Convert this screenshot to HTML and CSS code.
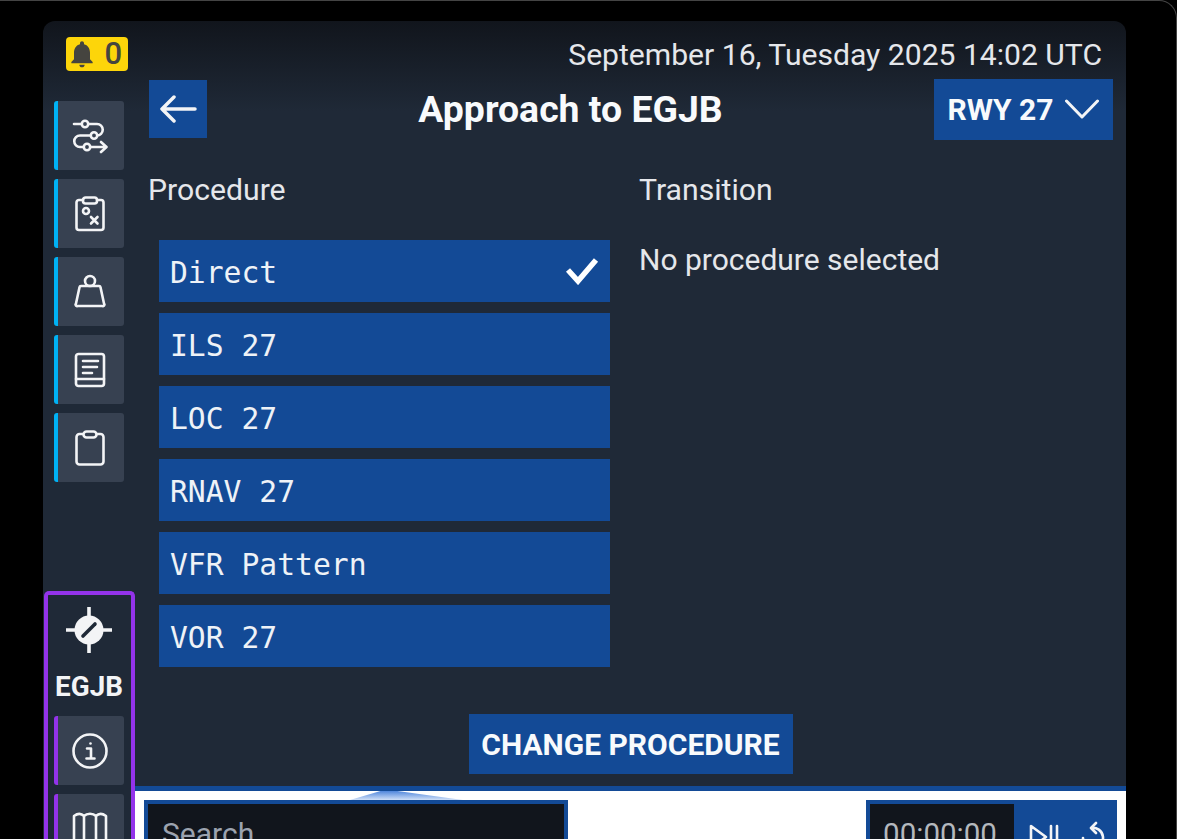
FILE: index.html
```html
<!DOCTYPE html>
<html lang="en">
<head>
<meta charset="utf-8">
<title>Approach to EGJB</title>
<link rel="stylesheet" href="styles.css">
</head>
<body>
<div class="device">
  <div class="screen">
    <aside class="sidebar">
      <div class="alert">
        <svg class="bell" viewBox="0 0 24 24"><path d="M12 22c1.1 0 2-.9 2-2h-4c0 1.100.9 2 2 2zm6-6v-5c0-3.070-1.640-5.640-4.500-6.320V4c0-.83-.67-1.500-1.500-1.500s-1.500.67-1.500 1.500v.68C7.630 5.360 6 7.920 6 11v5l-2 2v1h16v-1l-2-2z"/></svg>
        <span class="alert-count">0</span>
      </div>
      <nav class="tools">
        <button class="tool"><svg class="ico" viewBox="0 0 36 36"><path d="M2 6H25a5.700 5.700 0 0 1 0 11.500H8a5.700 5.700 0 0 0 0 11.500H34M29 24l5.500 5L29 34"/><circle class="dot" cx="13" cy="6" r="3.200"/><circle class="dot" cx="22" cy="17.500" r="3.200"/><circle class="dot" cx="15" cy="29" r="3.200"/></svg></button>
        <button class="tool"><svg class="ico" viewBox="0 0 36 36"><path d="M11 4H7a2.500 2.500 0 0 0-2.500 2.500v25A2.500 2.500 0 0 0 7 34h22a2.500 2.500 0 0 0 2.500-2.500v-25A2.500 2.500 0 0 0 29 4h-4"/><rect x="11" y="1.500" width="14" height="6" rx="2.500"/><circle cx="14" cy="15" r="3"/><path d="M19 21l6.500 6.500M25.500 21L19 27.500"/></svg></button>
        <button class="tool"><svg class="ico" viewBox="0 0 36 36"><circle cx="18" cy="7" r="5"/><path d="M9 12H27a1.500 1.500 0 0 1 1.500 1.200L32 29.500A1.500 1.500 0 0 1 30.500 32H5.500A1.500 1.500 0 0 1 4 29.500L7.500 13.200A1.500 1.500 0 0 1 9 12Z"/></svg></button>
        <button class="tool"><svg class="ico" viewBox="0 0 36 36"><rect x="4" y="2" width="28" height="32" rx="2.500"/><path d="M4 27H32M11 9H26M11 15H25M11 21H20"/></svg></button>
        <button class="tool"><svg class="ico" viewBox="0 0 36 36"><rect x="4.500" y="4" width="27" height="30.500" rx="3"/><rect x="11.500" y="1.500" width="13" height="6" rx="3" class="clip"/></svg></button>
      </nav>
      <section class="airport">
        <svg class="target" viewBox="0 0 48 48"><path class="cross" d="M24 1V47M1 24H47"/><circle cx="24" cy="24" r="14.500" class="disc"/><path class="slash" d="M18 30L30 18"/></svg>
        <div class="airport-code">EGJB</div>
        <button class="tool purple"><svg class="ico" viewBox="0 0 36 36"><circle cx="18" cy="18" r="16.500"/><path d="M15 15.500H19V25M14.500 25.500H22.500"/><circle cx="18.500" cy="10.500" r="1.300" class="fill"/></svg></button>
        <button class="tool purple"><svg class="ico" viewBox="0 0 36 36"><path d="M2 5C6 2 9 2 12 5C15 2 21 2 24 5C27 2 30 2 34 5V36H2ZM12 5V36M24 5V36"/></svg></button>
      </section>
    </aside>
    <main class="main">
      <div class="date">September 16, Tuesday 2025 14:02 UTC</div>
      <header class="head">
        <button class="btn back"><svg class="ico arrow" viewBox="0 0 38 28"><path d="M36 14H3M15 2L3 14L15 26"/></svg></button>
        <h1 class="title">Approach to EGJB</h1>
        <button class="btn rwy">RWY 27<svg class="ico chev" viewBox="0 0 34 20"><path d="M1.500 2L17 18L32.500 2"/></svg></button>
      </header>
      <div class="cols">
        <section class="col-proc">
          <h2 class="label">Procedure</h2>
          <ul class="list">
            <li class="item">Direct<svg class="check" viewBox="0 0 34 28"><path d="M3 13L13 24L31 3"/></svg></li>
            <li class="item">ILS 27</li>
            <li class="item">LOC 27</li>
            <li class="item">RNAV 27</li>
            <li class="item">VFR Pattern</li>
            <li class="item">VOR 27</li>
          </ul>
        </section>
        <section class="col-trans">
          <h2 class="label">Transition</h2>
          <p class="none">No procedure selected</p>
        </section>
      </div>
      <div class="action"><button class="btn change">CHANGE PROCEDURE</button></div>
      <div class="map">
        <div class="flare"></div>
        <div class="search">Search</div>
        <div class="timer">
          <span class="time">00:00:00</span>
          <span class="controls">
            <svg class="ico step" viewBox="0 0 30 28"><path d="M2 3V25L17 14ZM22 3V25M28 3V25"/></svg>
            <svg class="ico reset" viewBox="0 0 24 28"><path d="M15 2L10 7L15 12M10 7A10 10 0 1 1 2 17"/></svg>
          </span>
        </div>
      </div>
    </main>
  </div>
</div>
</body>
</html>
```
FILE: styles.css
```css
* { box-sizing: border-box; }
html, body { margin: 0; height: 100%; background: #000; overflow: hidden; }
body { font-family: Roboto, "Liberation Sans", sans-serif; color: #e5e7eb; }
button { font: inherit; color: inherit; border: 0; padding: 0; margin: 0; }
h1, h2, p, ul { margin: 0; padding: 0; font-weight: 400; }
ul { list-style: none; }

.device { height: 839px; padding: 20px 50px 0 43px; border-top: 1px solid #444; border-right: 1px solid #444; border-top-right-radius: 18px; }
.screen { height: 818px; display: flex; border-radius: 12px 12px 0 0; overflow: hidden; background: linear-gradient(#11151c 0, #1f2937 90px); }

.sidebar { width: 92px; flex: none; padding-top: 16px; display: flex; flex-direction: column; }
.alert { width: 62px; height: 34px; margin-left: 23px; border-radius: 4px; background: #fdd50a; display: flex; align-items: center; justify-content: space-between; padding: 0 6px 0 0; }
.bell { width: 32px; height: 32px; fill: #45443f; }
.alert-count { font-size: 31px; line-height: 34px; color: #45443f; font-weight: 500; }
.tools { margin: 30px 0 0 11px; display: flex; flex-direction: column; gap: 9px; }
.tool { width: 70px; height: 69px; border-left: 4px solid #00b2f5; border-radius: 3px; background: #374151; display: flex; align-items: center; justify-content: center; flex: none; }
.tool .ico { width: 36px; height: 36px; margin-left: -2px; }
.ico { fill: none; stroke: #f3f4f6; stroke-width: 2.600; stroke-linecap: round; stroke-linejoin: round; }
.dot { fill: #374151; }
.clip { fill: #374151; }
.fill { fill: #f3f4f6; stroke: none; }

.airport { margin-top: 109px; width: 91px; margin-left: 1px; height: 300px; border: 4px solid #9333ea; border-bottom: 0; border-radius: 5px 5px 0 0; display: flex; flex-direction: column; align-items: center; }
.target { width: 48px; height: 48px; margin-top: 11px; margin-left: -2px; flex: none; }
.cross { stroke: #f3f4f6; stroke-width: 3.600; fill: none; }
.disc { fill: #f3f4f6; }
.slash { stroke: #1f2937; stroke-width: 3.600; stroke-linecap: round; }
.airport-code { font-size: 27.800px; font-weight: 700; line-height: 32px; margin-top: 17px; margin-left: -1px; color: #f3f4f6; }
.tool.purple { border-left-color: #9333ea; margin: 0 0 9px -1px; }
.airport-code + .tool { margin-top: 13px; }

.main { flex: 1; min-width: 0; display: flex; flex-direction: column; }
.date { font-size: 30.100px; line-height: 34px; text-align: right; padding: 17px 24px 0 0; height: 58px; flex: none; }
.head { display: flex; align-items: center; justify-content: space-between; padding: 0 13px 0 14px; position: relative; height: 60px; flex: none; }
.btn { background: #134a96; color: #f8fafc; display: flex; align-items: center; justify-content: center; }
.back { width: 58px; height: 58px; }
.arrow { width: 38px; height: 28px; stroke-width: 3.500; }
.title { font-size: 37.400px; font-weight: 700; line-height: 40px; color: #f8fafc; position: absolute; left: 14px; right: 134px; text-align: center; }
.rwy { width: 179px; height: 61px; font-size: 30px; font-weight: 700; gap: 12px; flex: none; }
.chev { width: 34px; height: 20px; stroke-width: 3; }

.cols { display: flex; padding-left: 14px; flex: none; height: 574px; margin-top: 1px; }
.col-proc { width: 491px; flex: none; }
.label { font-size: 30.200px; line-height: 34px; padding-top: 33px; height: 67px; margin-left: -1px; }
.list { margin: 33px 0 0 10px; display: flex; flex-direction: column; gap: 11px; }
.item { width: 451px; height: 62px; background: #134a96; color: #eef2f7; font-family: "DejaVu Sans Mono", "Liberation Mono", monospace; font-size: 29.700px; line-height: 58px; padding: 4px 0 0 11px; display: flex; align-items: center; justify-content: space-between; white-space: pre; }
.check { width: 34px; height: 28px; margin: -4px 11px 0 0; fill: none; stroke: #fff; stroke-width: 5.500; }
.none { font-size: 30px; line-height: 34px; margin: 36px 0 0 -1px; }

.action { display: flex; justify-content: center; height: 72px; flex: none; }
.change { width: 324px; height: 60px; font-size: 30px; font-weight: 700; }

.map { flex: 1; min-height: 0; background: #fff; border-top: 5px solid #134a96; padding: 9px 9px 0 9px; display: flex; justify-content: space-between; align-items: flex-start; position: relative; }
.flare { position: absolute; left: 215px; top: 0; width: 113px; height: 9px; background: linear-gradient(#4f86dc, #cfdff7); clip-path: polygon(0 100%, 27% 0, 42% 0, 100% 100%); }
.search { width: 424px; height: 80px; background: #11151c; border: 4px solid #134a96; color: #9ca3af; font-size: 30px; line-height: 60px; padding-left: 14px; flex: none; }
.timer { width: 251px; height: 80px; background: #134a96; border: 4px solid #134a96; display: flex; flex: none; }
.time { width: 144px; background: #11151c; color: #b4b8bd; font-size: 29.500px; line-height: 60px; text-align: center; padding-right: 4px; }
.controls { flex: 1; display: flex; align-items: flex-start; padding: 19px 0 0 15px; gap: 22px; }
.step { width: 30px; height: 28px; }
.reset { width: 24px; height: 28px; margin-top: -2px; }
```
